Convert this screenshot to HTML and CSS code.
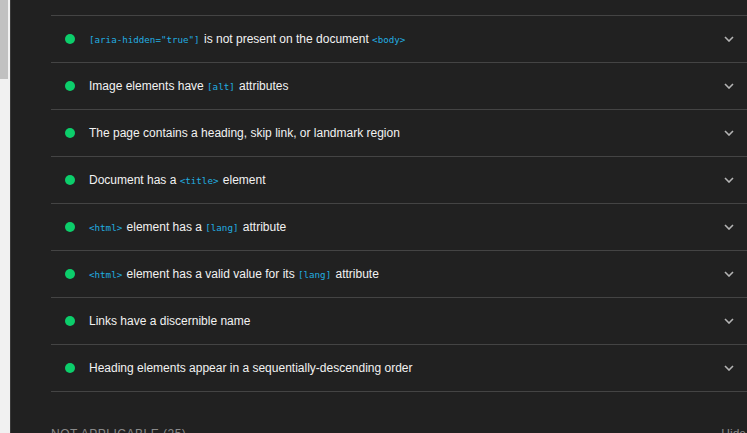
FILE: index.html
```html
<!DOCTYPE html>
<html>
<head>
<meta charset="utf-8">
<link rel="stylesheet" href="styles.css">
</head>
<body>
<div class="page">
  <div class="gutter"><div class="thumb"></div></div>
  <div class="panel">
    <div class="top"></div>
    <div class="audits">
      <div class="audit"><span class="dot"></span><span class="title"><code>[aria-hidden="true"]</code> is not present on the document <code>&lt;body&gt;</code></span><svg class="chev" viewBox="0 0 10 6"><path d="M1 1l4 4 4-4"/></svg></div>
      <div class="audit"><span class="dot"></span><span class="title">Image elements have <code>[alt]</code> attributes</span><svg class="chev" viewBox="0 0 10 6"><path d="M1 1l4 4 4-4"/></svg></div>
      <div class="audit"><span class="dot"></span><span class="title">The page contains a heading, skip link, or landmark region</span><svg class="chev" viewBox="0 0 10 6"><path d="M1 1l4 4 4-4"/></svg></div>
      <div class="audit"><span class="dot"></span><span class="title">Document has a <code>&lt;title&gt;</code> element</span><svg class="chev" viewBox="0 0 10 6"><path d="M1 1l4 4 4-4"/></svg></div>
      <div class="audit"><span class="dot"></span><span class="title"><code>&lt;html&gt;</code> element has a <code>[lang]</code> attribute</span><svg class="chev" viewBox="0 0 10 6"><path d="M1 1l4 4 4-4"/></svg></div>
      <div class="audit"><span class="dot"></span><span class="title"><code>&lt;html&gt;</code> element has a valid value for its <code>[lang]</code> attribute</span><svg class="chev" viewBox="0 0 10 6"><path d="M1 1l4 4 4-4"/></svg></div>
      <div class="audit"><span class="dot"></span><span class="title">Links have a discernible name</span><svg class="chev" viewBox="0 0 10 6"><path d="M1 1l4 4 4-4"/></svg></div>
      <div class="audit"><span class="dot"></span><span class="title">Heading elements appear in a sequentially-descending order</span><svg class="chev" viewBox="0 0 10 6"><path d="M1 1l4 4 4-4"/></svg></div>
    </div>
    <div class="group-head"><span class="group-title">Not applicable (25)</span><span class="hide">Hide</span></div>
  </div>
</div>
</body>
</html>
```
FILE: styles.css
```css
html, body {
  margin: 0;
  padding: 0;
  height: 100%;
  overflow: hidden;
  background: #212121;
}
.page {
  display: flex;
  height: 433px;
  font-family: "Liberation Sans", Arial, sans-serif;
}
.gutter {
  width: 10px;
  flex: none;
  background: #f1f1f1;
  border-right: 1px solid #3a3a3a;
}
.thumb {
  width: 8px;
  height: 79px;
  background: #c1c1c1;
}
.panel {
  flex: 1;
  padding-left: 40px;
  background: #212121;
}
.top {
  height: 15px;
}
.audits {
  border-top: 1px solid #444;
}
.audit {
  display: flex;
  align-items: center;
  height: 46px;
  border-bottom: 1px solid #444;
  padding-left: 14px;
  padding-right: 13px;
}
.dot {
  width: 10px;
  height: 10px;
  border-radius: 50%;
  background: #0cce6b;
  flex: none;
}
.title {
  flex: 1;
  margin-left: 14px;
  font-size: 12px;
  color: #f2f2f2;
  white-space: nowrap;
}
code {
  font-family: "DejaVu Sans Mono", "Liberation Mono", monospace;
  font-size: 9.2px;
  color: #22aee0;
  margin-right: 1px;
}
.chev {
  width: 10px;
  height: 6px;
  fill: none;
  stroke: #b4b4b4;
  stroke-width: 1.6;
}
.group-head {
  display: flex;
  justify-content: space-between;
  padding-top: 35px;
  font-size: 12px;
  color: #8a8a8a;
}
.group-title {
  text-transform: uppercase;
  letter-spacing: 0.5px;
}
.hide {
  margin-right: 1px;
}
```
